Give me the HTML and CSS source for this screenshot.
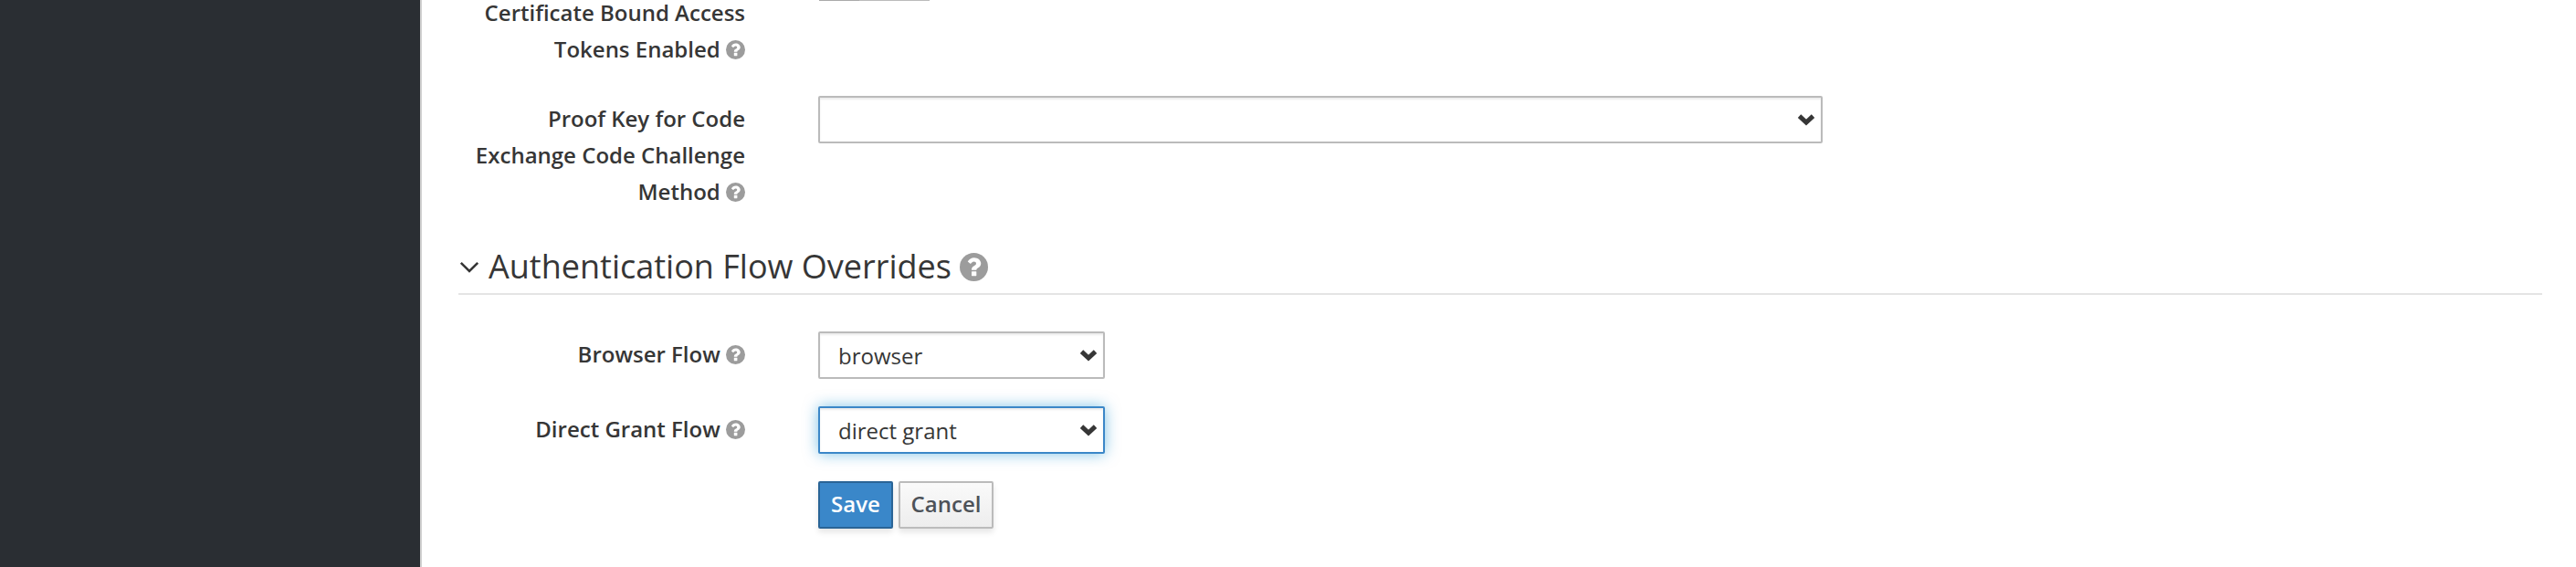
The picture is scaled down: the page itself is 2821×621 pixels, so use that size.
FILE: index.html
```html
<!DOCTYPE html>
<html lang="en">
<head>
<meta charset="utf-8">
<title>Client Settings</title>
<link rel="stylesheet" href="styles.css">
</head>
<body>
<svg class="defs" aria-hidden="true">
  <symbol id="help" viewBox="0 0 32 32">
    <circle cx="16" cy="16" r="16" fill="#9c9c9c"/>
    <path d="M9 9.9C10.6 6.9 13 5.3 16.4 5.3C20.5 5.3 24 8.2 24 11.9C24 16.7 18.9 16.8 18.9 19.3H13.4C13.2 14.4 18.6 14.7 18.6 12.1C18.6 10.7 17.5 9.9 16 9.9C14.5 9.9 13.6 11 12.3 12.5Z" fill="#fff"/>
    <rect x="13.4" y="20.9" width="5.5" height="5.2" rx=".5" fill="#fff"/>
  </symbol>
  <symbol id="caret" viewBox="0 0 20 14">
    <path d="M2.5 2.2L10 9.2L17.5 2.2" fill="none" stroke="#363636" stroke-width="5"/>
  </symbol>
</svg>
<div class="page">
  <aside class="sidebar"></aside>
  <main class="content">
    <div class="row row-mtls">
      <label class="label">Certificate Bound Access Tokens Enabled <svg class="help"><use href="#help"/></svg></label>
      <div class="toggle"><span class="toggle-on"></span></div>
    </div>
    <div class="row row-pkce">
      <label class="label">Proof Key for Code Exchange Code Challenge Method <svg class="help"><use href="#help"/></svg></label>
      <div class="field field-wide">
        <select class="select"><option></option></select>
        <svg class="caret"><use href="#caret"/></svg>
      </div>
    </div>
    <h2 class="legend">
      <svg class="angle" viewBox="0 0 22 14"><path d="M1.8 1.8L11 11L20.2 1.8" fill="none" stroke="#363636" stroke-width="2.6"/></svg>
      <span class="legend-text">Authentication Flow Overrides</span>
      <svg class="help help-large"><use href="#help"/></svg>
    </h2>
    <div class="row row-flow">
      <label class="label">Browser Flow <svg class="help"><use href="#help"/></svg></label>
      <div class="field">
        <select class="select"><option>browser</option></select>
        <svg class="caret"><use href="#caret"/></svg>
      </div>
    </div>
    <div class="row row-flow">
      <label class="label">Direct Grant Flow <svg class="help"><use href="#help"/></svg></label>
      <div class="field">
        <select class="select select-focused"><option>direct grant</option></select>
        <svg class="caret"><use href="#caret"/></svg>
      </div>
    </div>
    <div class="actions">
      <button class="btn btn-primary">Save</button>
      <button class="btn btn-default">Cancel</button>
    </div>
  </main>
</div>
</body>
</html>
```
FILE: styles.css
```css
* { box-sizing: border-box; }
body {
  margin: 0;
  background: #fff;
  color: #363636;
  font: 24px/40px "Open Sans", sans-serif;
}
.defs { display: none; }
.page {
  display: flex;
  height: 621px;
  overflow: hidden;
}
.sidebar {
  flex: none;
  width: 462px;
  background: #2a2e33;
  border-right: 2px solid #d1d1d1;
}
.content {
  flex: 1;
  padding: 0 37px 0 40px;
}
.row {
  display: grid;
  grid-template-columns: 314px 1fr;
  column-gap: 80px;
  align-items: start;
}
.label {
  padding-top: 5px;
  font-weight: 600;
  text-align: right;
}
.help {
  width: 21px;
  height: 21px;
  vertical-align: -2px;
}
.row-mtls { margin-top: -11px; height: 116px; }
.row-pkce { height: 158px; }
.row-flow { height: 82px; }
.toggle {
  width: 121px;
  height: 12px;
  margin-left: 1px;
  background: #bbb;
}
.toggle-on {
  display: block;
  width: 44px;
  height: 12px;
  background: #aaa;
}
.field {
  position: relative;
  width: 314px;
}
.field-wide { width: 1100px; }
.select {
  display: block;
  appearance: none;
  width: 100%;
  height: 52px;
  margin: 0;
  padding: 1px 50px 0 20px;
  border: 2px solid #bbb;
  border-radius: 2px;
  outline: 0;
  background: #fff;
  box-shadow: inset 0 2px 2px rgba(0, 0, 0, .075);
  color: #363636;
  font: 24px/40px "Open Sans", sans-serif;
}
.select-focused {
  border-color: #3b87c8;
  box-shadow: inset 0 2px 2px rgba(0, 0, 0, .075), 0 0 16px rgba(0, 136, 206, .5);
}
.caret {
  position: absolute;
  top: 20px;
  right: 8px;
  width: 20px;
  height: 14px;
  pointer-events: none;
}
.legend {
  display: flex;
  align-items: center;
  height: 60px;
  margin: 0 0 40px;
  border-bottom: 2px solid #e4e4e4;
  font-size: 36px;
  font-weight: 400;
}
.angle { width: 22px; height: 14px; margin: 2px 10px 0 1px; }
.legend-text { white-space: nowrap; }
.help-large { width: 31px; height: 31px; margin-left: 9px; }
.actions {
  display: flex;
  gap: 6px;
  padding-left: 394px;
}
.btn {
  height: 52px;
  padding: 0 0 2px;
  border: 2px solid #bbb;
  border-radius: 2px;
  box-shadow: 0 4px 6px rgba(3, 3, 3, .1);
  font: 600 24px/40px "Open Sans", sans-serif;
}
.btn-primary {
  width: 82px;
  border-color: #2a6496;
  background: #3a87c9;
  color: #fff;
}
.btn-default {
  width: 104px;
  background: linear-gradient(#fafafa, #ededed);
  color: #4d5258;
}
```
